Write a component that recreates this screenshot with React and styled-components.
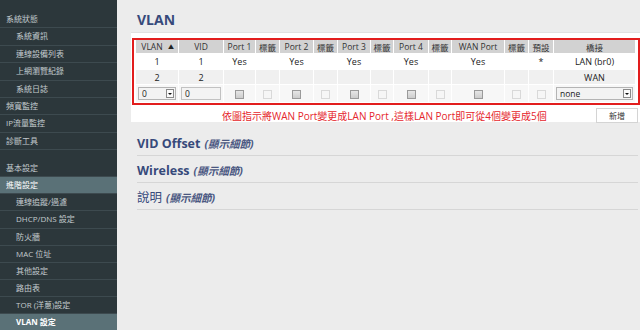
import React from "react";
import styled, { createGlobalStyle } from "styled-components";

const GlobalStyle = createGlobalStyle`
  html, body {
    margin: 0;
    padding: 0;
    background: #ececec;
    font-family: "Open Sans", "Noto Sans CJK TC", sans-serif;
  }
`;

const menuGroups = [
  {
    rowHeight: 17.4,
    items: [
      { label: "系統狀態", top: true },
      { label: "系統資訊" },
      { label: "連線設備列表" },
      { label: "上網瀏覽紀錄" },
      { label: "系統日誌" },
      { label: "頻寬監控", top: true },
      { label: "IP流量監控", top: true },
      { label: "診斷工具", top: true },
    ],
  },
  {
    rowHeight: 17.1,
    items: [
      { label: "基本設定", top: true },
      { label: "進階設定", top: true, open: true },
      { label: "連線追蹤/過濾" },
      { label: "DHCP/DNS 設定" },
      { label: "防火牆" },
      { label: "MAC 位址" },
      { label: "其他設定" },
      { label: "路由表" },
      { label: "TOR (洋蔥)設定" },
      { label: "VLAN 設定", active: true },
    ],
  },
];

const columns = [
  { title: "VLAN", width: 43, sort: true },
  { title: "VID", width: 45 },
  { title: "Port 1", width: 32 },
  { title: "標籤", width: 24 },
  { title: "Port 2", width: 34 },
  { title: "標籤", width: 24 },
  { title: "Port 3", width: 33 },
  { title: "標籤", width: 23 },
  { title: "Port 4", width: 35 },
  { title: "標籤", width: 23 },
  { title: "WAN Port", width: 53 },
  { title: "標籤", width: 24 },
  { title: "預設", width: 25 },
  { title: "橋接", width: 82 },
];

const rows = [
  ["1", "1", "Yes", "", "Yes", "", "Yes", "", "Yes", "", "Yes", "", "*", "LAN (br0)"],
  ["2", "2", "", "", "", "", "", "", "", "", "", "", "", "WAN"],
];

const Page = styled.div`
  display: flex;
  width: 640px;
  height: 330px;
  overflow: hidden;
`;

const Sidebar = styled.nav`
  width: 117px;
  flex-shrink: 0;
  background: #2c373b;
  padding-top: 11px;
  box-sizing: border-box;
`;

const MenuGroup = styled.ul`
  list-style: none;
  margin: 0 0 10px;
  padding: 0;
`;

const MenuItem = styled.li`
  height: ${(p) => p.$h}px;
  line-height: ${(p) => p.$h - 1}px;
  box-sizing: border-box;
  border-bottom: 1px solid #3d4a4f;
  padding-left: ${(p) => (p.$top ? "6px" : "16px")};
  font-size: 8px;
  color: ${(p) => (p.$highlight ? "#ffffff" : "#c3cbce")};
  font-weight: ${(p) => (p.$active ? 700 : 400)};
  background: ${(p) => (p.$highlight ? "#5a7177" : "transparent")};
  white-space: nowrap;
`;

const Main = styled.main`
  flex: 1;
  padding: 0 1px 0 14px;
  box-sizing: border-box;
`;

const Title = styled.h1`
  margin: 0;
  padding: 11px 0 0 6px;
  height: 21px;
  font-size: 14px;
  line-height: 18px;
  font-weight: 700;
  color: #374a7b;
`;

const Panel = styled.section`
  background: #ffffff;
  border-top: 1px solid #e0e0e0;
  padding: 5px 0 0 1px;
  height: 84px;
`;

const RedFrame = styled.div`
  border: 2px solid #e21d1d;
  padding: 0 1px;
  width: 502px;
`;

const Table = styled.table`
  table-layout: fixed;
  border-collapse: collapse;
  width: 500px;
`;

const Th = styled.th`
  background: #d2d2d2;
  border: 1px solid #ffffff;
  border-top: 0;
  height: 13px;
  padding: 0 ${(p) => (p.$sort ? "10px" : "0")} 0 0;
  font-size: 8.5px;
  font-weight: 400;
  color: #333;
  text-align: center;
  position: relative;
  white-space: nowrap;
`;

const SortMark = styled.span`
  position: absolute;
  right: 4px;
  top: 2px;
  font-size: 6px;
  color: #222;
`;

const Tr = styled.tr`
  background: ${(p) => p.$bg};
`;

const Td = styled.td`
  border: 1px solid #ffffff;
  height: ${(p) => p.$h}px;
  padding: 0;
  font-size: 9px;
  color: #222;
  text-align: center;
  white-space: nowrap;
`;

const SelectBox = styled.div`
  display: flex;
  align-items: center;
  justify-content: space-between;
  height: 13px;
  margin: 0 2px;
  border: 1px solid #b4b4b4;
  background: #f3f3f3;
  font-size: 8.5px;
  color: #222;
  padding-left: 3px;
  box-sizing: border-box;
`;

const Arrow = styled.span`
  width: 8px;
  height: 9px;
  margin-right: 1px;
  border: 1px solid #8a8a8a;
  background: #fafafa;
  box-sizing: border-box;
  display: flex;
  align-items: center;
  justify-content: center;
  &::after {
    content: "";
    border-left: 2px solid transparent;
    border-right: 2px solid transparent;
    border-top: 2px solid #111;
  }
`;

const TextBox = styled.div`
  height: 13px;
  margin: 0 2px;
  border: 1px solid #c2c2c2;
  background: #f3f3f3;
  font-size: 8.5px;
  color: #222;
  text-align: left;
  padding-left: 3px;
  line-height: 11px;
  box-sizing: border-box;
`;

const Check = styled.span`
  display: inline-block;
  width: 7px;
  height: 7px;
  vertical-align: middle;
  border: 1px solid ${(p) => (p.$dim ? "#d9d9d9" : "#9a9a9a")};
  background: ${(p) => (p.$dim ? "#f6f6f6" : "linear-gradient(#e6e6e6, #cdcdcd)")};
`;

const MessageRow = styled.div`
  display: flex;
  align-items: center;
  height: 18px;
  margin-top: 1px;
  width: 506px;
`;

const Message = styled.span`
  margin-left: 90px;
  font-size: 10px;
  color: #e5262c;
  white-space: nowrap;
`;

const AddButton = styled.button`
  margin-left: auto;
  width: 42px;
  height: 15px;
  padding: 0;
  border: 1px solid #d4d4d4;
  background: #ffffff;
  font-family: inherit;
  font-size: 8px;
  color: #333;
`;

const Sections = styled.div`
  margin: 7px 2px 0 6px;
`;

const Section = styled.div`
  border-bottom: 1px solid #d6d6d6;
  padding-top: 7px;
  box-sizing: border-box;
  height: 27px;
  line-height: 16px;
  font-size: 12.5px;
  font-weight: ${(p) => (p.$plain ? 400 : 700)};
  color: #374a7b;
`;

const Detail = styled.span`
  font-size: 10.5px;
  font-style: italic;
  font-weight: 700;
  color: #4a5781;
  margin-left: 4px;
`;

function SideMenu() {
  return (
    <Sidebar>
      {menuGroups.map((group, gi) => (
        <MenuGroup key={gi}>
          {group.items.map((item) => (
            <MenuItem
              key={item.label}
              $h={group.rowHeight}
              $top={item.top}
              $highlight={item.open || item.active}
              $active={item.active}
            >
              {item.label}
            </MenuItem>
          ))}
        </MenuGroup>
      ))}
    </Sidebar>
  );
}

function VlanTable() {
  return (
    <RedFrame>
      <Table>
        <colgroup>
          {columns.map((c, i) => (
            <col key={i} style={{ width: c.width }} />
          ))}
        </colgroup>
        <thead>
          <tr>
            {columns.map((c, i) => (
              <Th key={i} $sort={c.sort}>
                {c.title}
                {c.sort && <SortMark>▲</SortMark>}
              </Th>
            ))}
          </tr>
        </thead>
        <tbody>
          {rows.map((r, ri) => (
            <Tr key={ri} $bg={ri === 0 ? "#ffffff" : "#f0f0f0"}>
              {r.map((v, ci) => (
                <Td key={ci} $h={ri === 0 ? 15 : 14}>
                  {v}
                </Td>
              ))}
            </Tr>
          ))}
          <Tr $bg="#f7f7f7">
            <Td $h={17}>
              <SelectBox>
                0<Arrow />
              </SelectBox>
            </Td>
            <Td $h={17}>
              <TextBox>0</TextBox>
            </Td>
            {columns.slice(2, 13).map((c, i) => (
              <Td key={i} $h={17}>
                <Check $dim={c.title === "標籤" || c.title === "預設"} />
              </Td>
            ))}
            <Td $h={17}>
              <SelectBox>
                none<Arrow />
              </SelectBox>
            </Td>
          </Tr>
        </tbody>
      </Table>
    </RedFrame>
  );
}

export default function App() {
  return (
    <>
      <GlobalStyle />
      <Page>
        <SideMenu />
        <Main>
          <Title>VLAN</Title>
          <Panel>
            <VlanTable />
            <MessageRow>
              <Message>依圖指示將WAN Port變更成LAN Port ,這樣LAN Port即可從4個變更成5個</Message>
              <AddButton>新增</AddButton>
            </MessageRow>
          </Panel>
          <Sections>
            <Section>
              VID Offset<Detail>(顯示細節)</Detail>
            </Section>
            <Section>
              Wireless<Detail>(顯示細節)</Detail>
            </Section>
            <Section $plain>
              說明<Detail>(顯示細節)</Detail>
            </Section>
          </Sections>
        </Main>
      </Page>
    </>
  );
}
